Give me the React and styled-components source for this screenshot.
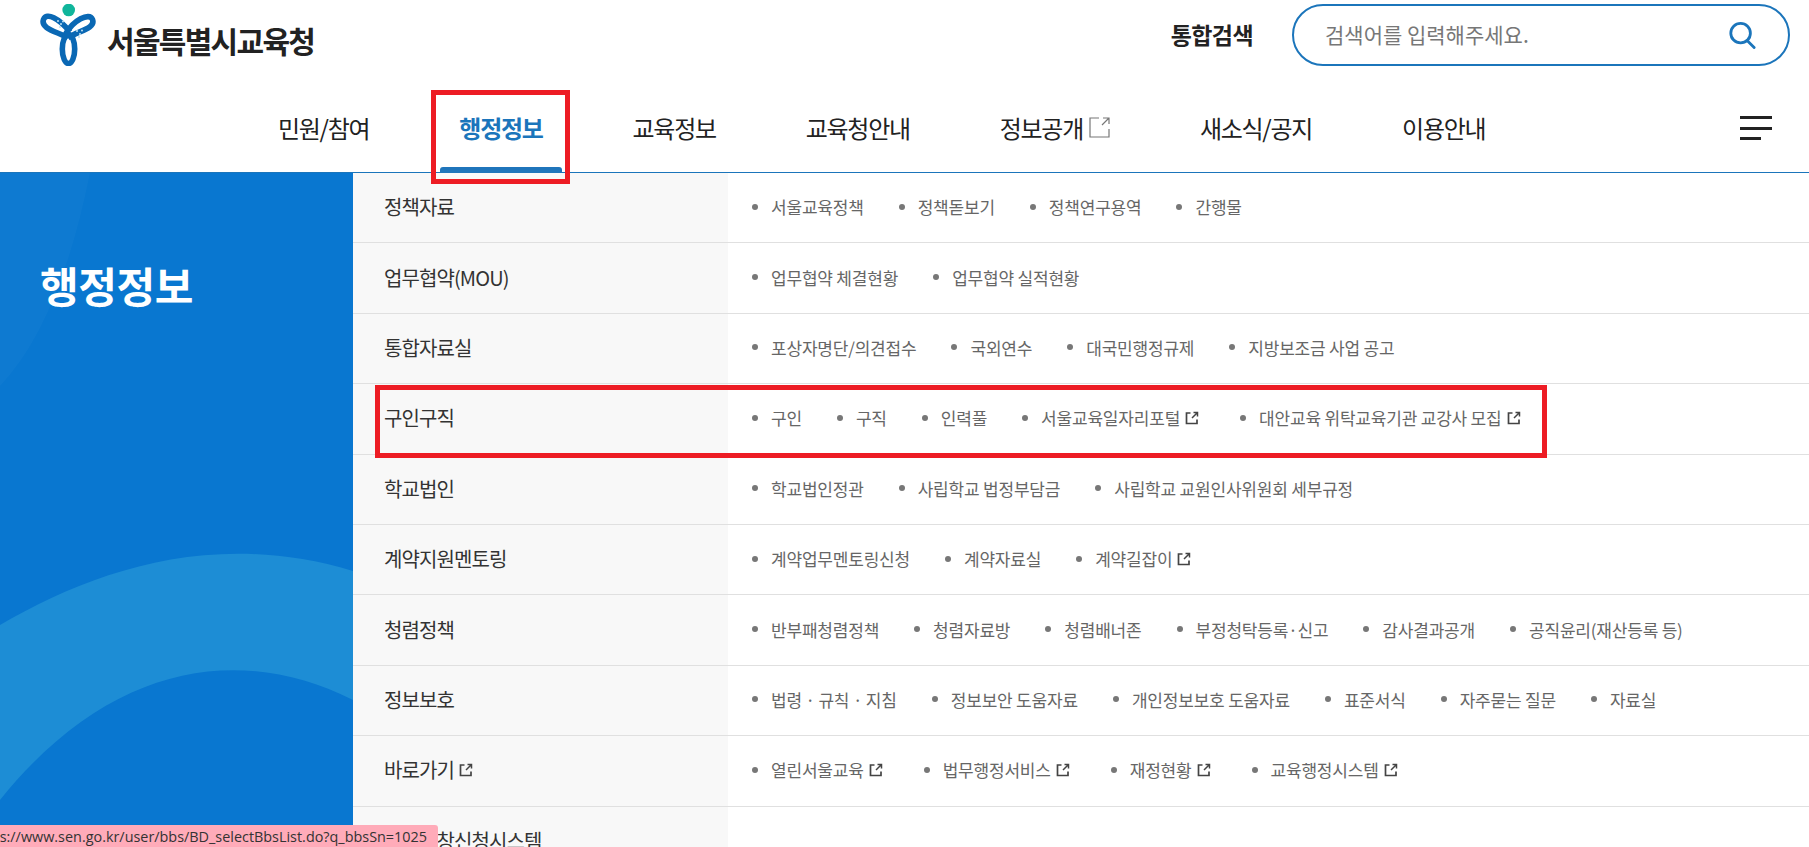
import { createGlobalStyle } from 'styled-components';
import styled from 'styled-components';

const GlobalStyle = createGlobalStyle`
  html, body {
    margin: 0;
    padding: 0;
    background: #fff;
    overflow: hidden;
  }
  body {
    font-family: "Noto Sans CJK KR", "Noto Sans", sans-serif;
  }
  * { box-sizing: border-box; }
`;

const Page = styled.div`
  position: relative;
  height: 847px;
  overflow: hidden;
`;

const TopBar = styled.div`
  display: flex;
  align-items: center;
  height: 69px;
  padding: 0 19px 0 40px;
`;

const LogoLink = styled.a`
  display: flex;
  align-items: center;
  gap: 11px;
`;

const LogoTitle = styled.span`
  font-size: 30px;
  font-weight: 700;
  letter-spacing: -1.7px;
  color: #222;
  margin-top: 11px;
`;

const SearchLabel = styled.span`
  margin-left: auto;
  margin-right: 39px;
  margin-bottom: 2px;
  font-size: 23px;
  font-weight: 700;
  letter-spacing: -0.6px;
  color: #222;
`;

const SearchBox = styled.div`
  display: flex;
  align-items: center;
  justify-content: space-between;
  width: 498px;
  height: 62px;
  border: 2px solid #1b75bb;
  border-radius: 31px;
  padding: 0 32px 0 31px;
`;

const SearchPlaceholder = styled.span`
  margin-bottom: 2px;
  font-size: 21px;
  color: #777;
`;

const NavBar = styled.nav`
  position: relative;
  z-index: 2;
  display: flex;
  align-items: center;
  gap: 90px;
  height: 104px;
  padding: 13px 37px 0 278px;
  border-bottom: 1px solid #1b75bb;
`;

const NavItem = styled.a`
  position: relative;
  display: flex;
  align-items: center;
  gap: 6px;
  font-size: 24px;
  letter-spacing: -1.28px;
  color: ${p => (p.$active ? '#1b75bb' : '#222')};
  font-weight: ${p => (p.$active ? 700 : 400)};
`;

const ActiveBar = styled.span`
  position: absolute;
  left: -19px;
  right: -19px;
  top: 57px;
  height: 6px;
  background: #1f75bb;
  border-radius: 3px 3px 0 0;
`;

const NavMark = styled.span`
  position: absolute;
  left: -28px;
  right: -27px;
  top: -20px;
  height: 94px;
  border: 5px solid #ed1c24;
`;

const Hamburger = styled.div`
  margin-left: auto;
  margin-top: 2px;
  display: flex;
  flex-direction: column;
  gap: 7.5px;
  width: 32px;
`;

const HamburgerLine = styled.span`
  display: block;
  height: 3px;
  width: ${p => p.$w}px;
  background: #222;
`;

const Content = styled.div`
  display: grid;
  grid-template-columns: 353px 1fr;
  height: 674px;
`;

const SideTitleBox = styled.aside`
  position: relative;
  background: #0977d0;
  padding: 87px 0 0 40px;
  overflow: hidden;
`;

const SideWave = styled.svg`
  position: absolute;
  left: 0;
  top: 0;
`;

const SideTitle = styled.h2`
  position: relative;
  margin: 0;
  font-size: 42px;
  line-height: 50px;
  font-weight: 700;
  letter-spacing: -0.4px;
  color: #fff;
`;

const Rows = styled.div`
  display: flex;
  flex-direction: column;
`;

const Row = styled.div`
  position: relative;
  z-index: ${p => (p.$marked ? 1 : 'auto')};
  display: grid;
  grid-template-columns: 375px 1fr;
  flex: none;
  height: 70.4px;
  border-bottom: 1px solid #e0e0e0;
`;

const RowLabel = styled.div`
  display: flex;
  align-items: center;
  gap: 5px;
  padding: 0 0 2px 31px;
  background: #f8f8f8;
  font-size: 20px;
  letter-spacing: -0.9px;
  color: #333;
`;

const RowLinks = styled.ul`
  display: flex;
  align-items: center;
  margin: 0;
  padding: 0 0 2px 24px;
  list-style: none;
  gap: 35px;
`;

const RowLink = styled.li`
  position: relative;
  display: flex;
  align-items: center;
  gap: 5px;
  padding-left: 19px;
  padding-right: ${p => (p.$ext ? 6 : 0)}px;
  font-size: 17px;
  letter-spacing: -0.2px;
  color: #666;
  white-space: nowrap;
  &::before {
    content: '';
    position: absolute;
    left: 0;
    top: 50%;
    width: 6px;
    height: 6px;
    margin-top: -3px;
    border-radius: 50%;
    background: #777;
  }
`;

const RowMark = styled.span`
  position: absolute;
  left: 22px;
  top: 1px;
  width: 1172px;
  height: 73px;
  border: 5px solid #ed1c24;
`;

const StatusTip = styled.div`
  position: absolute;
  z-index: 3;
  left: 0;
  bottom: 0;
  width: 438px;
  height: 22px;
  display: flex;
  justify-content: flex-end;
  align-items: center;
  padding-right: 11px;
  overflow: hidden;
  background: #ffabb9;
  border-top-right-radius: 3px;
  font-family: "Open Sans", "Noto Sans", sans-serif;
  font-size: 14.4px;
  color: #333;
  white-space: nowrap;
`;

const LinkIcon = () => (
  <svg width="14" height="14" viewBox="0 0 14 14" fill="none" stroke="#444" strokeWidth="1.7">
    <path d="M5.5 2H1.5v10.5h10.5V8.5" />
    <path d="M8.5 1.5h4v4M12.5 1.5 7 7" strokeWidth="1.5" />
  </svg>
);

const NavLinkIcon = () => (
  <svg width="21" height="21" viewBox="0 0 21 21" fill="none" stroke="#777" strokeWidth="1.2">
    <path d="M10 1H1v19h19v-8" />
    <path d="M14 1h6v6M20 1l-7 7" />
  </svg>
);

const SearchIcon = () => (
  <svg width="28" height="28" viewBox="0 0 30 30" fill="none" stroke="#1b75bb" strokeWidth="3" strokeLinecap="round">
    <circle cx="13.5" cy="13" r="10.5" />
    <path d="M20.5 21 28 28.5" />
  </svg>
);

const LogoMark = () => (
  <svg width="56" height="62" viewBox="10 4 56 62" fill="none">
    <circle cx="38.7" cy="10" r="6.3" fill="#10b59b" />
    <g stroke="#0a68b4" strokeWidth="5.6">
      <path d="M38 38C29 32 10 29 13.5 19.5 16.5 12 29 18 40 32" />
      <path d="M38 38C47 31 66 29 62.5 19.5 59.5 12 43 20 35 35" />
      <ellipse cx="38.5" cy="49" rx="6.2" ry="14.5" />
    </g>
    <g fill="#bfe0f2">
      <circle cx="28" cy="21" r="1" />
      <circle cx="31" cy="24" r="1" />
      <circle cx="33" cy="21.5" r="1" />
      <circle cx="30" cy="27" r="1" />
      <circle cx="47" cy="31" r="1" />
      <circle cx="50" cy="34" r="1" />
      <circle cx="52" cy="30.5" r="1" />
      <circle cx="49" cy="37" r="1" />
    </g>
  </svg>
);

const navItems = [
  { label: '민원/참여' },
  { label: '행정정보', active: true },
  { label: '교육정보' },
  { label: '교육청안내' },
  { label: '정보공개', ext: true },
  { label: '새소식/공지' },
  { label: '이용안내' },
];

const rows = [
  { label: '정책자료', links: ['서울교육정책', '정책돋보기', '정책연구용역', '간행물'] },
  { label: '업무협약(MOU)', links: ['업무협약 체결현황', '업무협약 실적현황'] },
  { label: '통합자료실', links: ['포상자명단/의견접수', '국외연수', '대국민행정규제', '지방보조금 사업 공고'] },
  { label: '구인구직', mark: true, links: ['구인', '구직', '인력풀', { t: '서울교육일자리포털', ext: true }, { t: '대안교육 위탁교육기관 교강사 모집', ext: true }] },
  { label: '학교법인', links: ['학교법인정관', '사립학교 법정부담금', '사립학교 교원인사위원회 세부규정'] },
  { label: '계약지원멘토링', links: ['계약업무멘토링신청', '계약자료실', { t: '계약길잡이', ext: true }] },
  { label: '청렴정책', links: ['반부패청렴정책', '청렴자료방', '청렴배너존', '부정청탁등록·신고', '감사결과공개', '공직윤리(재산등록 등)'] },
  { label: '정보보호', links: ['법령 · 규칙 · 지침', '정보보안 도움자료', '개인정보보호 도움자료', '표준서식', '자주묻는 질문', '자료실'] },
  { label: '바로가기', ext: true, links: [{ t: '열린서울교육', ext: true }, { t: '법무행정서비스', ext: true }, { t: '재정현황', ext: true }, { t: '교육행정시스템', ext: true }] },
  { label: '교원표창신청시스템', links: [] },
];

export default function App() {
  return (
    <Page>
      <GlobalStyle />
      <TopBar>
        <LogoLink>
          <LogoMark />
          <LogoTitle>서울특별시교육청</LogoTitle>
        </LogoLink>
        <SearchLabel>통합검색</SearchLabel>
        <SearchBox>
          <SearchPlaceholder>검색어를 입력해주세요.</SearchPlaceholder>
          <SearchIcon />
        </SearchBox>
      </TopBar>
      <NavBar>
        {navItems.map(item => (
          <NavItem key={item.label} $active={item.active}>
            {item.label}
            {item.ext && <NavLinkIcon />}
            {item.active && <ActiveBar />}
            {item.active && <NavMark />}
          </NavItem>
        ))}
        <Hamburger>
          <HamburgerLine $w={32} />
          <HamburgerLine $w={32} />
          <HamburgerLine $w={21} />
        </Hamburger>
      </NavBar>
      <Content>
        <SideTitleBox>
          <SideWave width="353" height="674" viewBox="0 0 353 674">
            <path d="M0 213Q60 150 90 0H0Z" fill="#fff" opacity="0.025" />
            <path d="M0 452C90 400 210 355 353 398V527C240 470 110 490 0 627Z" fill="#1d8dd5" />
          </SideWave>
          <SideTitle>행정정보</SideTitle>
        </SideTitleBox>
        <Rows>
          {rows.map(row => (
            <Row key={row.label} $marked={row.mark}>
              <RowLabel>
                {row.label}
                {row.ext && <LinkIcon />}
              </RowLabel>
              <RowLinks>
                {row.links.map(link => {
                  const text = typeof link === 'string' ? link : link.t;
                  return (
                    <RowLink key={text} $ext={link.ext}>
                      {text}
                      {link.ext && <LinkIcon />}
                    </RowLink>
                  );
                })}
              </RowLinks>
              {row.mark && <RowMark />}
            </Row>
          ))}
        </Rows>
      </Content>
      <StatusTip>s://www.sen.go.kr/user/bbs/BD_selectBbsList.do?q_bbsSn=1025</StatusTip>
    </Page>
  );
}
